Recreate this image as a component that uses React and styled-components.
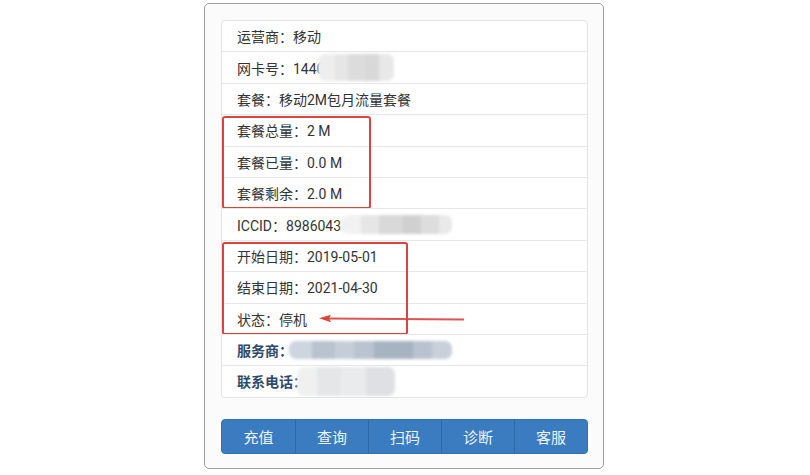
import React from "react";
import styled, { createGlobalStyle } from "styled-components";

const Global = createGlobalStyle`
  html, body { margin: 0; padding: 0; background: #ffffff; }
  body { font-family: Roboto, "Noto Sans CJK SC", sans-serif; }
`;

const Page = styled.div`
  width: 810px;
  height: 475px;
  overflow: hidden;
  padding: 3px 0 0 204px;
  box-sizing: border-box;
`;

const Card = styled.div`
  width: 400px;
  box-sizing: border-box;
  border: 1.5px solid #9c9ea2;
  border-radius: 5px;
  background: #fbfbfb;
  padding: 16px 15px 14px 16px;
  display: flex;
  flex-direction: column;
  gap: 21px;
`;

const List = styled.div`
  background: #ffffff;
  border: 1px solid #e2e4e6;
  border-radius: 4px;
  display: flex;
  flex-direction: column;
`;

const Group = styled.div`
  position: relative;
  display: flex;
  flex-direction: column;
  border-top: 1px solid #e6e7e9;
  &::after {
    content: "";
    position: absolute;
    left: 0;
    top: 1px;
    bottom: -1px;
    width: ${(p) => p.$w}px;
    border: 2px solid #d8443e;
    border-radius: 3px;
    box-sizing: border-box;
    pointer-events: none;
  }
  & > div:first-child { border-top: none; }
`;

const Row = styled.div`
  position: relative;
  height: 30.4px;
  display: flex;
  align-items: center;
  padding-left: 15px;
  font-size: 14px;
  color: ${(p) => (p.$strong ? "#2e4a68" : "#333333")};
  font-weight: ${(p) => (p.$strong ? 700 : 400)};
  border-top: 1px solid #e6e7e9;
  white-space: nowrap;
  &:first-child { border-top: none; }
`;

const Mosaic = styled.span`
  display: inline-block;
  width: ${(p) => p.$w}px;
  height: ${(p) => p.$h}px;
  margin-left: ${(p) => p.$ml || 0}px;
  border-radius: 7px;
  background: ${(p) => p.$bg};
  filter: blur(1.6px);
`;

const Arrow = styled.svg`
  position: absolute;
  left: 94px;
  top: 8px;
  overflow: visible;
`;

const ButtonBar = styled.div`
  display: grid;
  grid-template-columns: repeat(5, 1fr);
  height: 35px;
  border-radius: 4px;
  overflow: hidden;
  background: #3b7cc0;
  border: 1px solid #3370b0;
  box-sizing: border-box;
`;

const Btn = styled.div`
  display: flex;
  align-items: center;
  justify-content: center;
  font-size: 15px;
  color: #eef4fb;
  border-left: ${(p) => (p.$first ? "none" : "1px solid #2f6aa8")};
  font-family: "Noto Sans CJK SC", sans-serif;
`;

const greyMosaic =
  "linear-gradient(90deg, #eeeeee 0 22%, #e6e6e6 22% 40%, #dcdcdc 40% 62%, #d8d8d8 62% 80%, #e8e8e8 80% 100%)";
const iccidMosaic =
  "linear-gradient(90deg, #f2f2f2 0 18%, #e6e6e6 18% 34%, #d8d8d8 34% 56%, #d0d0d0 56% 72%, #dddddd 72% 88%, #e9e9e9 88% 100%)";
const blueMosaic =
  "linear-gradient(90deg, #cdd5de 0 14%, #b8c3cf 14% 28%, #c5ced8 28% 40%, #b9c4d0 40% 52%, #a6b3c1 52% 76%, #b8c3cf 76% 88%, #c8d0da 88% 100%)";
const phoneMosaic =
  "linear-gradient(90deg, #f0f0f0 0 20%, #e5e6e8 20% 45%, #eaebec 45% 70%, #dfe0e3 70% 100%)";

export default function App() {
  return (
    <>
      <Global />
      <Page>
        <Card>
          <List>
            <Row>运营商：移动</Row>
            <Row>
              网卡号：1440
              <Mosaic $w={76} $h={27} $ml={-6} $bg={greyMosaic} />
            </Row>
            <Row>套餐：移动2M包月流量套餐</Row>
            <Group $w={149}>
              <Row>套餐总量：2 M</Row>
              <Row>套餐已量：0.0 M</Row>
              <Row>套餐剩余：2.0 M</Row>
            </Group>
            <Row>
              ICCID：8986043
              <Mosaic $w={111} $h={19} $bg={iccidMosaic} />
            </Row>
            <Group $w={186}>
              <Row>开始日期：2019-05-01</Row>
              <Row>结束日期：2021-04-30</Row>
              <Row>
                状态：停机
                <Arrow width="150" height="14" viewBox="0 0 150 14">
                  <line x1="12" y1="6.5" x2="148" y2="7.5" stroke="#d8443e" strokeWidth="2" strokeOpacity="0.9" />
                  <polygon points="3,6.3 15,2.8 13,6.5 15,10.2" fill="#d8443e" />
                </Arrow>
              </Row>
            </Group>
            <Row $strong>
              服务商：
              <Mosaic $w={163} $h={18} $ml={-4} $bg={blueMosaic} />
            </Row>
            <Row $strong>
              联系电话：
              <Mosaic $w={98} $h={29} $ml={-10} $bg={phoneMosaic} />
            </Row>
          </List>
          <ButtonBar>
            <Btn $first>充值</Btn>
            <Btn>查询</Btn>
            <Btn>扫码</Btn>
            <Btn>诊断</Btn>
            <Btn>客服</Btn>
          </ButtonBar>
        </Card>
      </Page>
    </>
  );
}
